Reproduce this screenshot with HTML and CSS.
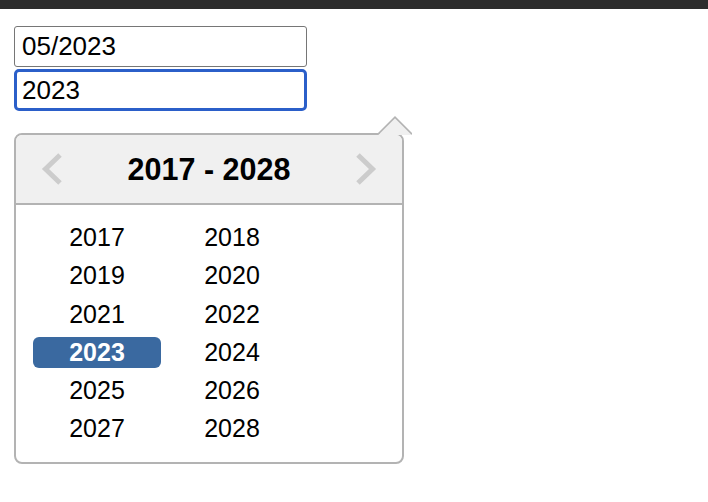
FILE: index.html
```html
<!DOCTYPE html>
<html>
<head>
<meta charset="utf-8">
<link rel="stylesheet" href="styles.css">
</head>
<body>
<div class="topbar"></div>
<div class="content">
  <input class="field" type="text" value="05/2023">
  <input class="field field-focus" type="text" value="2023">
  <div class="picker-wrap">
    <svg class="arrow" width="34" height="19" viewBox="0 0 34 19">
      <polygon points="0,19 17,1.5 34,19" fill="#f0f0f0"/>
      <polyline points="0,18.2 17,1.2 34,18.2" fill="none" stroke="#b3b3b3" stroke-width="1.6"/>
    </svg>
    <div class="picker">
      <div class="picker-head">
        <svg class="chev" width="22" height="34" viewBox="0 0 22 34"><polyline points="19,3 4.5,17 19,31" fill="none" stroke="#cccccc" stroke-width="5"/></svg>
        <div class="title">2017 - 2028</div>
        <svg class="chev" width="22" height="34" viewBox="0 0 22 34"><polyline points="3,3 17.5,17 3,31" fill="none" stroke="#cccccc" stroke-width="5"/></svg>
      </div>
      <div class="years">
        <div class="year">2017</div>
        <div class="year">2018</div>
        <div class="year">2019</div>
        <div class="year">2020</div>
        <div class="year">2021</div>
        <div class="year">2022</div>
        <div class="year year-sel">2023</div>
        <div class="year">2024</div>
        <div class="year">2025</div>
        <div class="year">2026</div>
        <div class="year">2027</div>
        <div class="year">2028</div>
      </div>
    </div>
  </div>
</div>
</body>
</html>
```

FILE: styles.css
```css
html, body {
  margin: 0;
  padding: 0;
  background: #ffffff;
  font-family: "Liberation Sans", Arial, sans-serif;
  color: #000;
}
.topbar {
  height: 9px;
  background: #2c2c2c;
}
.content {
  padding: 17px 0 0 14px;
}
.field {
  display: block;
  box-sizing: border-box;
  width: 293px;
  height: 41px;
  margin: 0;
  padding: 0 0 0 7px;
  border: 1px solid #767676;
  border-radius: 3px;
  font-family: "Liberation Sans", Arial, sans-serif;
  font-size: 26px;
  color: #000;
  background: #fff;
  outline: none;
}
.field-focus {
  margin-top: 2px;
  height: 42px;
  border: 3px solid #2b5fc9;
  border-radius: 5px;
  padding-left: 5px;
}
.picker-wrap {
  position: relative;
  margin-top: 22px;
  width: 390px;
}
.arrow {
  position: absolute;
  left: 364px;
  top: -17px;
  z-index: 2;
}
.picker {
  box-sizing: border-box;
  width: 390px;
  height: 331px;
  border: 2px solid #b3b3b3;
  border-radius: 8px;
  overflow: hidden;
  background: #fff;
}
.picker-head {
  height: 68px;
  background: #f0f0f0;
  border-bottom: 2px solid #b3b3b3;
  display: flex;
  align-items: center;
  justify-content: space-between;
  padding: 0 25px;
}
.chev {
  display: block;
}
.title {
  font-weight: bold;
  font-size: 30.5px;
}
.years {
  display: grid;
  grid-template-columns: 128px 128px;
  column-gap: 7px;
  row-gap: 7.3px;
  padding: 17px 0 0 17px;
}
.year {
  height: 31px;
  line-height: 31px;
  text-align: center;
  font-size: 25px;
  border-radius: 6px;
}
.year-sel {
  background: #3a69a0;
  color: #fff;
  font-weight: bold;
}
```
